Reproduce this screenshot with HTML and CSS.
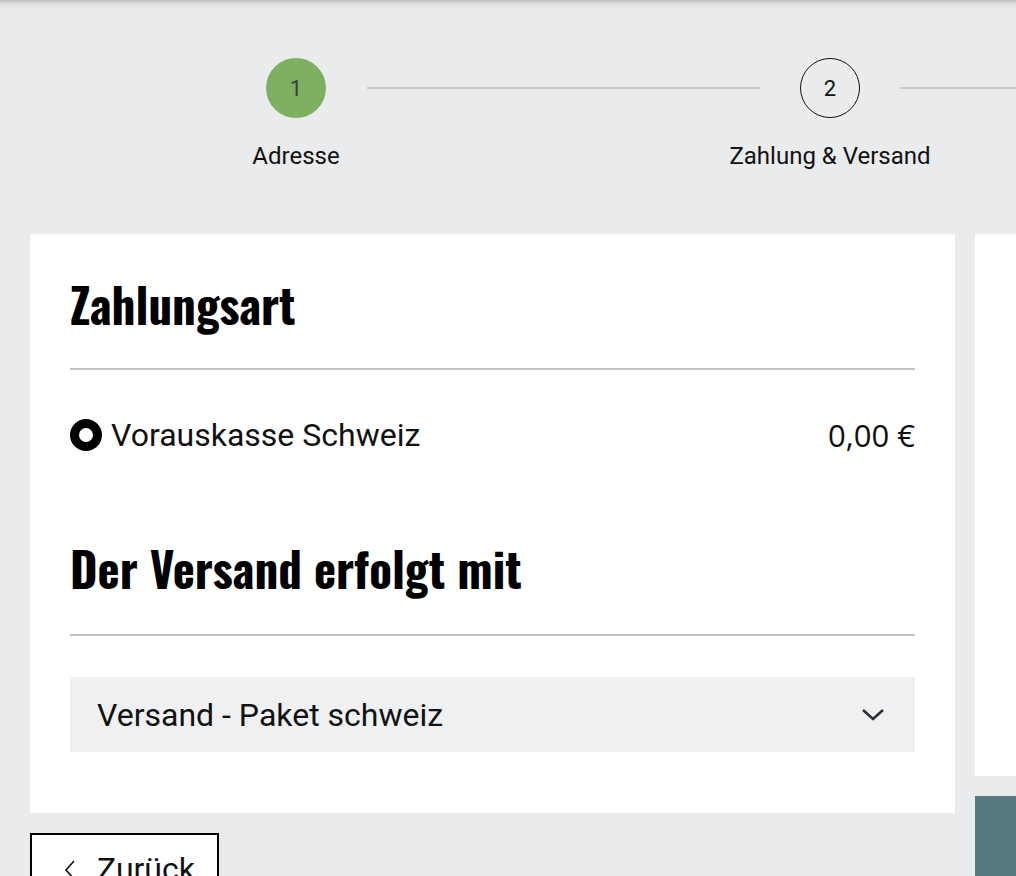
FILE: index.html
```html
<!DOCTYPE html>
<html lang="de">
<head>
<meta charset="utf-8">
<title>Checkout</title>
<link rel="stylesheet" href="styles.css">
</head>
<body>
<div class="page">
  <div class="stepper">
    <div class="step">
      <div class="circle done">1</div>
      <div class="step-label">Adresse</div>
    </div>
    <div class="connector first"></div>
    <div class="step">
      <div class="circle current">2</div>
      <div class="step-label">Zahlung &amp; Versand</div>
    </div>
    <div class="connector last"></div>
  </div>

  <div class="main">
    <div class="left">
      <section class="card">
        <h2 class="title">Zahlungsart</h2>
        <div class="divider"></div>
        <label class="pay-row">
          <span class="radio"></span>
          <span class="pay-name">Vorauskasse Schweiz</span>
          <span class="pay-price">0,00 €</span>
        </label>
        <h2 class="title second">Der Versand erfolgt mit</h2>
        <div class="divider second"></div>
        <div class="select">
          <span class="select-text">Versand - Paket schweiz</span>
          <svg class="chevron" width="24" height="16" viewBox="0 0 24 16"><path d="M2 3 L12 12 L22 3" fill="none" stroke="#2d3135" stroke-width="2.6"/></svg>
        </div>
      </section>
      <button class="back">
        <svg class="back-icon" width="16" height="24" viewBox="0 0 16 24"><path d="M12 4 L4 13 L12 22" fill="none" stroke="#111" stroke-width="1.6"/></svg>
        <span>Zurück</span>
      </button>
    </div>
    <aside class="right">
      <div class="summary"></div>
      <div class="teal"></div>
    </aside>
  </div>
</div>
</body>
</html>
```
FILE: styles.css
```css
html, body {
  margin: 0;
  padding: 0;
}
body {
  background: #eaebed;
  font-family: Roboto, "Liberation Sans", sans-serif;
  color: #111;
  overflow: hidden;
  height: 876px;
}
.page {
  background: linear-gradient(#b9babc 0, #d9dadc 3px, #eaebed 9px) no-repeat top left / 100% 10px;
  min-height: 876px;
}
.stepper {
  display: flex;
  align-items: flex-start;
  padding: 58px 0 0 266px;
}
.step {
  width: 60px;
  flex: none;
  display: flex;
  flex-direction: column;
  align-items: center;
}
.circle {
  width: 60px;
  height: 60px;
  box-sizing: border-box;
  border-radius: 50%;
  display: flex;
  align-items: center;
  justify-content: center;
  font-size: 22px;
}
.circle.done {
  background: #7fb062;
  color: #3a3f38;
}
.circle.current {
  border: 1.6px solid #111;
  color: #111;
}
.step-label {
  white-space: nowrap;
  font-size: 24px;
  line-height: 28px;
  margin-top: 24px;
  color: #111;
}
.connector {
  height: 2px;
  background: #c8c9cb;
  margin-top: 29px;
}
.connector.first {
  width: 393px;
  flex: none;
  margin-left: 41px;
  margin-right: 40px;
}
.connector.last {
  flex: 1;
  margin-left: 40px;
}
.main {
  display: flex;
  gap: 20px;
  padding-left: 30px;
  margin-top: 64px;
}
.left {
  width: 925px;
  flex: none;
}
.card {
  background: #fff;
  padding: 40px 40px 61px;
}
.title {
  margin: 0;
  font-family: "Oswald", "Liberation Sans Narrow", "DejaVu Sans Condensed", sans-serif;
  font-weight: 700;
  font-size: 47px;
  line-height: 60px;
  color: #000;
}
.title.second {
  margin-top: 87px;
}
.divider {
  height: 2px;
  background: #bfc3c8;
  margin-top: 34px;
}
.divider.second {
  margin-top: 36px;
}
.pay-row {
  display: flex;
  align-items: center;
  margin-top: 49px;
  height: 32px;
}
.radio {
  width: 32px;
  height: 32px;
  box-sizing: border-box;
  border: 9.5px solid #000;
  border-radius: 50%;
  flex: none;
}
.pay-name {
  font-size: 32px;
  margin-left: 9px;
  flex: 1;
}
.pay-price {
  font-family: "Open Sans", "Noto Sans", sans-serif;
  font-size: 31px;
}
.select {
  margin-top: 41px;
  height: 75px;
  background: #eff0f2;
  display: flex;
  align-items: center;
  padding: 0 30px 0 27px;
}
.select-text {
  flex: 1;
  font-size: 32px;
}
.chevron {
  display: block;
}
.back {
  margin-top: 20px;
  width: 189px;
  height: 72px;
  box-sizing: border-box;
  border: 2px solid #000;
  background: #fff;
  display: flex;
  align-items: center;
  padding: 0 0 0 30px;
  gap: 19px;
  font-family: Roboto, sans-serif;
  font-size: 32px;
  color: #111;
}
.back-icon {
  display: block;
}
.right {
  flex: 1;
  min-width: 0;
  display: flex;
  flex-direction: column;
  gap: 20px;
}
.summary {
  background: #fff;
  height: 542px;
}
.teal {
  background: #557a82;
  height: 200px;
}
```
